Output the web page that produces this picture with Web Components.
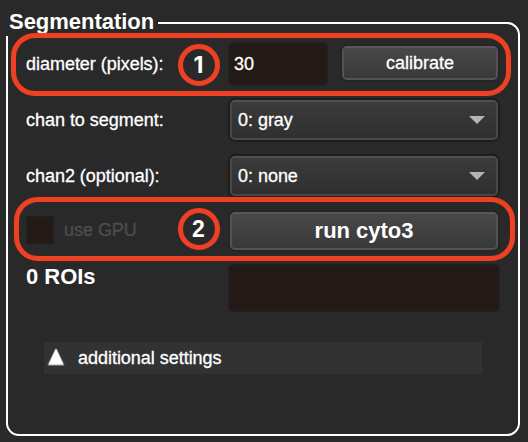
<!DOCTYPE html>
<html lang="en">
<head>
<meta charset="utf-8">
<title>Segmentation</title>
<style>
  html, body { margin: 0; height: 100%; background: #292929; overflow: hidden; }
  body { font: 18px/20px "Liberation Sans", Arial, sans-serif; letter-spacing: -.03px; color: #fff; }
</style>
</head>
<body>
<seg-panel></seg-panel>
<script>
const define = (name, html) => customElements.define(name, class extends HTMLElement {
  constructor() {
    super();
    const t = document.createElement('template');
    t.innerHTML = html;
    this.attachShadow({ mode: 'open' }).append(t.content.cloneNode(true));
  }
});

define('seg-label', `<style>
  :host { display: block; white-space: nowrap; -webkit-text-stroke: .3px currentColor; }
</style><slot></slot>`);

define('seg-field', `<style>
  :host { display: flex; align-items: center; box-sizing: border-box; padding: 0 4px;
    background: #231a17; border: 2px solid #211e1d; border-radius: 6px; }
</style><seg-label><slot></slot></seg-label>`);

define('seg-button', `<style>
  :host { display: flex; align-items: center; justify-content: center; box-sizing: border-box;
    border: 2px solid #535353; border-top-color: #585858; border-radius: 5px;
    background: linear-gradient(#484848, #393939) padding-box; box-shadow: 0 0 0 1.5px #242424; }
  :host([big]) { font-size: 22px; font-weight: 700; }
  :host([big]) seg-label { -webkit-text-stroke: 0; }
</style><seg-label><slot></slot></seg-label>`);

define('seg-select', `<style>
  :host { display: flex; align-items: center; justify-content: space-between; box-sizing: border-box;
    padding: 0 11px 0 6px; border: 2px solid #484848; border-top-color: #505050; border-radius: 5px;
    background: linear-gradient(#3b3b3b, #2f2f2f) padding-box; box-shadow: 0 0 0 2px #1e1e1e; }
  svg { display: block; }
</style><seg-label><slot></slot></seg-label>
<svg width="16" height="8" viewBox="0 0 16 8"><path d="M0 0H16L8 8Z" fill="#b4b4b4"/></svg>`);

define('seg-check', `<style>
  :host { display: flex; align-items: center; gap: 10px; color: #4d4d4d; }
  i { box-sizing: border-box; width: 28px; height: 28px; background: #231a17; border: 2px solid #211e1d; border-radius: 2px; }
</style><i></i><seg-label><slot></slot></seg-label>`);

define('seg-expander', `<style>
  :host { display: flex; align-items: center; box-sizing: border-box; height: 32px; gap: 12px; padding-left: 2px; background: #323232; }
  svg { display: block; margin-top: -3px; }
</style><svg width="20" height="20" viewBox="0 0 20 20">
<path d="M10 2.8L17.2 17.6H2.8Z" fill="#fff" stroke="#bbb" stroke-opacity=".6" stroke-width="2.4" stroke-linejoin="round"/>
<path d="M10 2.8L16.5 17H3.5Z" fill="#fff" stroke="#fff" stroke-width="1.2" stroke-linejoin="round"/></svg>
<seg-label><slot></slot></seg-label>`);

define('seg-marker', `<style>
  :host { display: block; box-sizing: border-box; position: absolute; border: 5px solid #ee4023; border-radius: 24px;
    box-shadow: 0 0 1px #992d1d, inset 0 0 1px #992d1d; }
  div { position: absolute; box-sizing: border-box; width: 42px; height: 42px; top: var(--by); left: var(--bx);
    border: 5px solid #ee4023; border-radius: 50%; display: flex; align-items: center; justify-content: center;
    font: 700 23px/24px var(--digit, Inter), sans-serif; padding-right: 1px; box-shadow: 0 0 1px #992d1d, inset 0 0 1px #992d1d; }
</style><div><slot></slot></div>`);

define('seg-panel', `<style>
  :host { display: block; box-sizing: border-box; position: relative; width: 528px; height: 442px; padding: 22px 8px 6px 6px; }
  section { box-sizing: border-box; height: 414px; border: 2px solid #fff; border-radius: 13px; }
  h1 { position: absolute; left: 0; top: 0; box-sizing: border-box; width: 158px; height: 36px; margin: 0;
    padding: 10px 0 0 9px; background: #292929; font-size: 22px; line-height: 24px; white-space: nowrap; }
  .grid { display: grid; grid-template-columns: 204px 268px; grid-template-rows: 44px 40px 42px 40px 48px;
    row-gap: 14px; padding: 18px 0 0 18px; align-items: center; }
  .grid > seg-select, .grid > seg-button { align-self: stretch; }
  .low { margin-top: 2px; }
  .first { display: flex; align-items: center; gap: 14px; margin-left: -2px; }
  .first seg-field { width: 100px; height: 44px; }
  .first seg-button { width: 156px; height: 34px; margin-top: -2px; }
  .result { margin: 0 -2px; height: 48px; }
  .count { font-size: 22px; font-weight: 700; -webkit-text-stroke: 0; margin-top: -23px; }
  seg-expander { margin: 30px 36px 0; }
  .m1 { left: 11px; top: 33px; width: 500px; height: 63px; --bx: 162px; --by: 5.5px; }
  .m2 { left: 14px; top: 197px; width: 501px; height: 64px; --bx: 159px; --by: 6px; --digit: "Liberation Sans"; }
</style>
<section>
  <div class="grid">
    <seg-label>diameter (pixels):</seg-label>
    <div class="first"><seg-field>30</seg-field><seg-button>calibrate</seg-button></div>
    <seg-label>chan to segment:</seg-label><seg-select>0: gray</seg-select>
    <seg-label class="low">chan2 (optional):</seg-label><seg-select class="low">0: none</seg-select>
    <seg-check>use GPU</seg-check><seg-button class="low" big>run cyto3</seg-button>
    <seg-label class="count">0 ROIs</seg-label><seg-field class="result"></seg-field>
  </div>
  <seg-expander>additional settings</seg-expander>
</section>
<h1>Segmentation</h1>
<seg-marker class="m1">1</seg-marker>
<seg-marker class="m2">2</seg-marker>`);
</script>
</body>
</html>
